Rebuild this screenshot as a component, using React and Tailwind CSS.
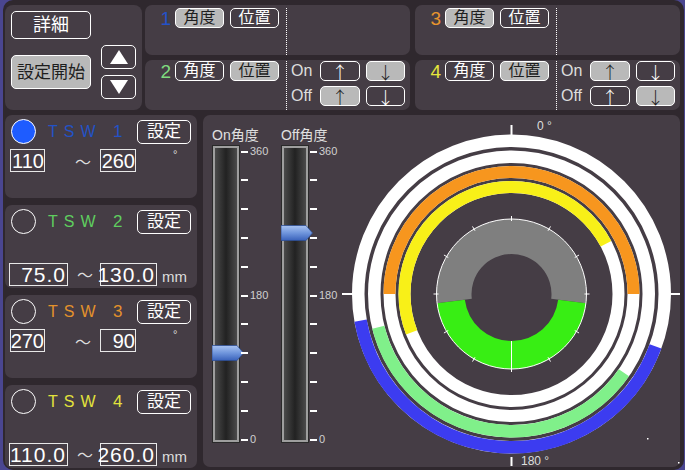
import React from "react";

const FONT = "font-['Liberation_Sans','Noto_Sans_CJK_JP',sans-serif]";

function Btn({ children, filled, className = "" }) {
  return (
    <div
      className={`flex items-center justify-center rounded-[5px] border-[1.5px] border-white leading-none ${
        filled ? "bg-[#b9b9b9] text-[#1e1e1e]" : "text-white"
      } ${className}`}
    >
      {children}
    </div>
  );
}

const topPanels = [
  { n: "1", color: "text-[#2352c8]", angle: true },
  { n: "3", color: "text-[#e8952e]", angle: true },
  { n: "2", color: "text-[#7fdb7f]", angle: false, on: [false, true], off: [true, false] },
  { n: "4", color: "text-[#e6e63c]", angle: false, on: [true, false], off: [false, true] },
];

function TopPanel({ p }) {
  const top = p.on ? "mt-[1px]" : "mt-[3px]";
  return (
    <div className="flex h-[50px] items-start rounded-[7px] bg-[#453d45]">
      <div className={`flex h-[20px] items-center ${top}`}>
        <span className={`w-[26px] text-right text-[19px] leading-none ${p.color}`}>{p.n}</span>
        <div className="ml-[4px] flex gap-[6px]">
          <Btn filled={p.angle} className="h-[20px] w-[49px] text-[16px]">角度</Btn>
          <Btn filled={!p.angle} className="h-[20px] w-[49px] text-[16px]">位置</Btn>
        </div>
      </div>
      <div className={`ml-[7px] self-stretch border-l border-dotted border-white ${top}`} />
      {p.on && (
        <div className="ml-[4px] mt-[1px] flex flex-col gap-[5px]">
          {[
            ["On", p.on],
            ["Off", p.off],
          ].map(([label, st]) => (
            <div key={label} className="flex h-[20px] items-center">
              <span className="w-[29px] text-[16px] leading-none text-[#dddddd]">{label}</span>
              <Btn filled={st[0]} className="h-[20px] w-[40px] font-['Noto_Sans_CJK_JP',sans-serif] text-[17px] font-light">↑</Btn>
              <Btn filled={st[1]} className="ml-[6px] h-[20px] w-[39px] font-['Noto_Sans_CJK_JP',sans-serif] text-[17px] font-light">↓</Btn>
            </div>
          ))}
        </div>
      )}
    </div>
  );
}

const tsws = [
  { n: "1", color: "text-[#2352c6]", active: true, a: "110", b: "260", deg: true },
  { n: "2", color: "text-[#5fce5f]", a: "75.0", b: "130.0" },
  { n: "3", color: "text-[#e3922c]", a: "270", b: "90", deg: true },
  { n: "4", color: "text-[#e2e23c]", a: "110.0", b: "260.0" },
];

function Box({ children, className = "" }) {
  return (
    <div
      className={`flex h-[23px] items-center justify-end border border-[#e8e8e8] text-white ${className}`}
    >
      {children}
    </div>
  );
}

function TswPanel({ t }) {
  return (
    <div className="h-[83px] rounded-[7px] bg-[#453d45]">
      <div className="mt-[4px] flex h-[25px] items-center">
        <div
          className={`ml-[6px] h-[25px] w-[25px] rounded-full border-[1.5px] border-white ${
            t.active ? "bg-[#1e5cff]" : ""
          }`}
        />
        <span className={`ml-[12px] w-[65px] text-[16px] tracking-[6px] ${t.color}`}>TSW</span>
        <span className={`text-[17px] ${t.color}`}>{t.n}</span>
        <Btn className="ml-auto mr-[6px] h-[24px] w-[54px] text-[17px]">設定</Btn>
      </div>
      {t.deg ? (
        <div className="mt-[5px] flex items-start">
          <Box className="ml-[5px] w-[35px] text-[20px] leading-none">{t.a}</Box>
          <span className="ml-[30px] mt-[2px] w-[15px] text-center text-[16px] text-[#dddddd]">～</span>
          <Box className="ml-[10px] w-[36px] text-[20px] leading-none">{t.b}</Box>
          <span className="ml-[37px] text-[11px] leading-none text-[#dddddd]">°</span>
        </div>
      ) : (
        <div className="mt-[29px] flex items-end">
          <Box className="ml-[4px] h-[22px] w-[59px] pr-[1px] text-[21px] leading-none tracking-[1px]">{t.a}</Box>
          <span className="ml-[9px] w-[13px] text-center text-[16px] leading-[20px] text-[#dddddd]">～</span>
          <Box className="ml-[10px] h-[22px] w-[57px] pr-[1px] text-[21px] leading-none tracking-[1px]">{t.b}</Box>
          <span className="ml-[5px] text-[15px] leading-[18px] text-[#dddddd]">mm</span>
        </div>
      )}
    </div>
  );
}

const TICK0 = 6.5;
const STEP = 28.8;

function Slider({ label, value }) {
  const thumbTop = TICK0 + (1 - value / 360) * STEP * 10 - 8;
  return (
    <div className="w-[70px]">
      <div className="h-[20px] text-[14px] leading-[20px] text-[#e0e0e0]">{label}</div>
      <div className="flex">
        <div className="relative h-[298px] w-[28px] border border-[#2a2a2a] bg-[#9e9e9e] p-[2px]">
          <div className="h-full w-full bg-linear-to-r from-[#4b4b4b] via-[#222222] to-[#4b4b4b]" />
          <svg className="absolute left-[-1px] w-[32px]" style={{ top: thumbTop }} height="16" viewBox="0 0 32 16">
            <defs>
              <linearGradient id={`th-${label}`} x1="0" y1="0" x2="0" y2="1">
                <stop offset="0" stopColor="#a9c4f2" />
                <stop offset="0.5" stopColor="#6f95dc" />
                <stop offset="1" stopColor="#3a62bb" />
              </linearGradient>
            </defs>
            <path d="M0 0.5 H25 L31.5 8 L25 15.5 H0 Z" fill={`url(#th-${label})`} stroke="#2f4f94" strokeWidth="0.8" />
          </svg>
        </div>
        <div className="relative ml-[1px] h-[298px] w-[40px]">
          {Array.from({ length: 11 }).map((_, i) => (
            <div
              key={i}
              className="absolute left-0 h-[2px] w-[7px] bg-white"
              style={{ top: TICK0 + i * STEP - 1 }}
            />
          ))}
          {[
            ["360", 0],
            ["180", 5],
            ["0", 10],
          ].map(([txt, i]) => (
            <span
              key={txt}
              className="absolute left-[9px] text-[11px] leading-none text-[#d0d0d0]"
              style={{ top: TICK0 + i * STEP - 6 }}
            >
              {txt}
            </span>
          ))}
        </div>
      </div>
    </div>
  );
}

const CX = 171.5;
const CY = 179;
const rad = (a) => (a * Math.PI) / 180;
const P = (r, a) => [CX + r * Math.sin(rad(a)), CY - r * Math.cos(rad(a))];

function arc(r, a0, a1) {
  const sweep = (((a1 - a0) % 360) + 360) % 360;
  const [x0, y0] = P(r, a0);
  const [x1, y1] = P(r, a1);
  return `M${x0} ${y0}A${r} ${r} 0 ${sweep > 180 ? 1 : 0} 1 ${x1} ${y1}`;
}

function sector(ri, ro, a0, a1) {
  const sweep = (((a1 - a0) % 360) + 360) % 360;
  const l = sweep > 180 ? 1 : 0;
  const [x0, y0] = P(ro, a0);
  const [x1, y1] = P(ro, a1);
  const [x2, y2] = P(ri, a1);
  const [x3, y3] = P(ri, a0);
  return `M${x0} ${y0}A${ro} ${ro} 0 ${l} 1 ${x1} ${y1}L${x2} ${y2}A${ri} ${ri} 0 ${l} 0 ${x3} ${y3}Z`;
}

const rings = [
  { r: 153.25, w: 12.5, color: "#3c3cf0", a0: 110, a1: 260 },
  { r: 137.25, w: 12.5, color: "#80f08a", a0: 125, a1: 256 },
  { r: 122, w: 12, color: "#f7961e", a0: 270, a1: 90 },
  { r: 107, w: 12, color: "#f8f018", a0: 249, a1: 62 },
];

function Chart() {
  return (
    <svg width="340" height="352" viewBox="0 0 340 352">
      {rings.map((g) => (
        <g key={g.r}>
          <circle cx={CX} cy={CY} r={g.r} fill="none" stroke="#ffffff" strokeWidth={g.w} />
          <path d={arc(g.r, g.a0, g.a1)} fill="none" stroke={g.color} strokeWidth={g.w} />
        </g>
      ))}
      <path d={sector(40, 75, 263, 97)} fill="#7f7f7f" />
      <path d={sector(47, 75, 97, 263)} fill="#38ee14" />
      <circle cx={CX} cy={CY} r="75" fill="none" stroke="#ffffff" strokeWidth="1" />
      {Array.from({ length: 12 }).map((_, i) => {
        const [x0, y0] = P(73, i * 30);
        const [x1, y1] = P(78, i * 30);
        return <line key={i} x1={x0} y1={y0} x2={x1} y2={y1} stroke="#ffffff" strokeWidth="1" />;
      })}
      <line x1={CX} y1={CY + 47} x2={CX} y2={CY + 78} stroke="#ffffff" strokeWidth="1" />
      <line x1={CX} y1="10" x2={CX} y2="20" stroke="#ffffff" strokeWidth="2" />
      <line x1={CX} y1="342" x2={CX} y2="351" stroke="#ffffff" strokeWidth="2" />
      <line x1="2" y1={CY} x2="13" y2={CY} stroke="#ffffff" strokeWidth="2" />
      <line x1="330" y1={CY} x2="340" y2={CY} stroke="#ffffff" strokeWidth="2" />
      <text x="197" y="15" fontSize="12" fill="#dddddd" fontFamily="Liberation Sans">0 °</text>
      <text x="181" y="350" fontSize="12" fill="#dddddd" fontFamily="Liberation Sans">180 °</text>
      <rect x="307" y="323" width="1.5" height="1.5" fill="#ffffff" />
      <rect x="338" y="347" width="1.5" height="1.5" fill="#ffffff" />
    </svg>
  );
}

export default function App() {
  return (
    <div className={`h-[470px] w-[685px] overflow-hidden bg-[#4a4690] ${FONT}`}>
      <div className="ml-[3px] flex h-[470px] w-[681px] flex-col gap-[5px] rounded-[10px] bg-[#2f282e] pl-[2px] pt-[5px]">
        <div className="flex gap-[3px]">
          <div className="flex h-[105px] w-[137px] rounded-[8px] bg-[#453d45]">
            <div className="ml-[6px] mt-[6px] flex flex-col">
              <Btn className="h-[28px] w-[80px] text-[18px]">詳細</Btn>
              <Btn filled className="mt-[16px] h-[34px] w-[80px] text-[17px]">設定開始</Btn>
            </div>
            <div className="ml-[10px] mt-[40px] flex flex-col gap-[6px]">
              <Btn className="h-[24px] w-[35px]">
                <svg width="20" height="16" viewBox="0 0 20 16">
                  <path d="M10 1 L19 15 H1 Z" fill="#ffffff" />
                </svg>
              </Btn>
              <Btn className="h-[24px] w-[35px]">
                <svg width="20" height="16" viewBox="0 0 20 16">
                  <path d="M1 1 H19 L10 15 Z" fill="#ffffff" />
                </svg>
              </Btn>
            </div>
          </div>
          <div className="grid w-[535px] grid-cols-2 gap-[5px]">
            {topPanels.map((p) => (
              <TopPanel key={p.n} p={p} />
            ))}
          </div>
        </div>
        <div className="flex gap-[6px]">
          <div className="flex w-[192px] flex-col gap-[7px]">
            {tsws.map((t) => (
              <TswPanel key={t.n} t={t} />
            ))}
          </div>
          <div className="flex h-[352px] w-[477px] rounded-[7px] bg-[#453d45]">
            <div className="flex w-[137px] pl-[9px] pt-[10px]">
              <Slider label="On角度" value={110} />
              <Slider label="Off角度" value={260} />
            </div>
            <Chart />
          </div>
        </div>
      </div>
    </div>
  );
}
